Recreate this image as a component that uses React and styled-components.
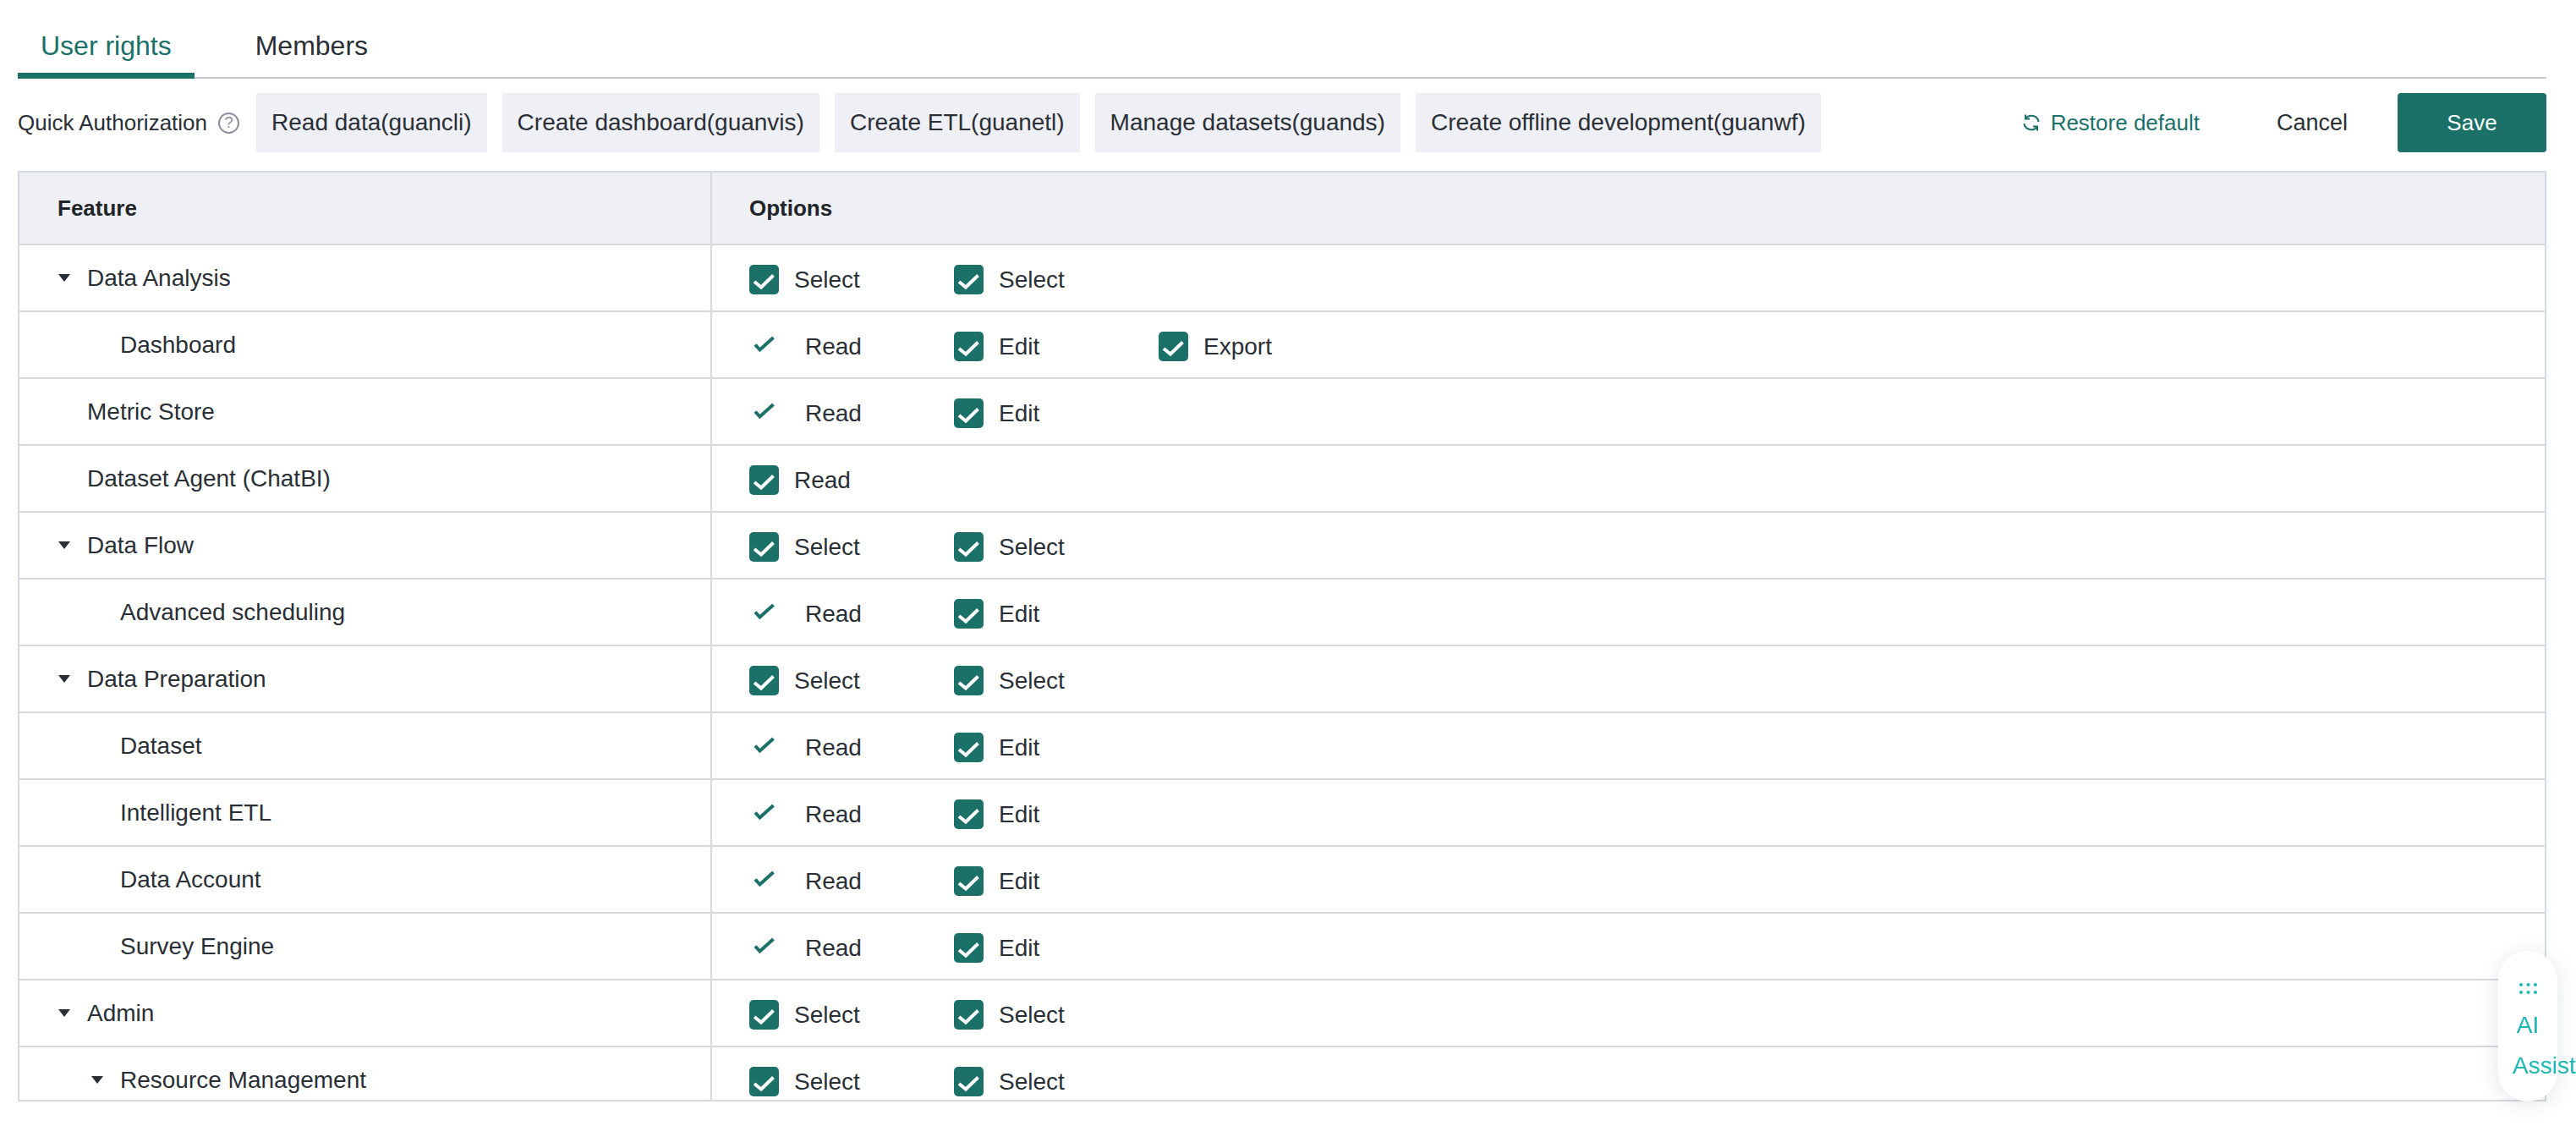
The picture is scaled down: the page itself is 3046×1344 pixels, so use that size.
import { createGlobalStyle } from 'styled-components';
import styled from 'styled-components';

const GlobalStyle = createGlobalStyle`
  html, body {
    margin: 0;
    height: 100%;
    overflow: hidden;
    background: #fff;
    font-family: "Liberation Sans", Arial, sans-serif;
    color: #2a2f36;
  }
`;

const Page = styled.div`
  padding: 0 35px 0 21px;
`;

const TabBar = styled.div`
  display: flex;
  align-items: flex-end;
  height: 93px;
  box-sizing: border-box;
  border-bottom: 2px solid #c3c8d4;
`;

const Tab = styled.div`
  height: 66px;
  box-sizing: border-box;
  margin-bottom: -2px;
  padding: 8px 27px 0;
  margin-right: 45px;
  font-size: 32px;
  line-height: 38px;
  color: ${(p) => (p.$active ? '#1b7168' : '#2a2f36')};
  border-bottom: 7px solid ${(p) => (p.$active ? '#1b7168' : 'transparent')};
`;

const Toolbar = styled.div`
  display: flex;
  align-items: center;
  height: 70px;
  margin-top: 17px;
`;

const QuickLabel = styled.span`
  font-size: 26px;
  white-space: nowrap;
`;

const HelpIcon = styled.span`
  display: flex;
  align-items: center;
  justify-content: center;
  width: 25px;
  height: 25px;
  box-sizing: border-box;
  margin: 0 20px 0 13px;
  border: 2px solid #8b909c;
  border-radius: 50%;
  font-size: 19px;
  color: #8b909c;
`;

const Chip = styled.button`
  height: 70px;
  padding: 0 18px;
  margin-right: 18px;
  border: 0;
  background: #eff0f5;
  font-family: inherit;
  font-size: 28px;
  color: #2a2f36;
  white-space: nowrap;
`;

const RestoreLink = styled.a`
  display: flex;
  align-items: center;
  gap: 12px;
  margin-left: auto;
  font-size: 26px;
  color: #1b7168;
`;

const CancelButton = styled.button`
  margin-left: 91px;
  padding: 0;
  border: 0;
  background: none;
  font-family: inherit;
  font-size: 27px;
  color: #2a2f36;
`;

const SaveButton = styled.button`
  width: 176px;
  height: 70px;
  margin-left: 59px;
  border: 0;
  border-radius: 4px;
  background: #1b7168;
  font-family: inherit;
  font-size: 26px;
  color: #fff;
`;

const Table = styled.div`
  height: 1100px;
  box-sizing: border-box;
  margin-top: 22px;
  border: 2px solid #d5d9e0;
  overflow: hidden;
`;

const HeadRow = styled.div`
  display: flex;
  height: 86px;
  box-sizing: border-box;
  background: #eff0f5;
  border-bottom: 2px solid #d5d9e0;
  font-size: 26px;
  font-weight: 700;
  color: #212529;
`;

const HeadFeature = styled.div`
  display: flex;
  align-items: center;
  width: 819px;
  box-sizing: border-box;
  padding-left: 45px;
  border-right: 2px solid #d5d9e0;
`;

const HeadOptions = styled.div`
  display: flex;
  align-items: center;
  padding-left: 44px;
`;

const ScrollBody = styled.div`
  height: 1010px;
  overflow-y: scroll;

  &::-webkit-scrollbar {
    width: 13px;
  }
  &::-webkit-scrollbar-track {
    background: transparent;
  }
  &::-webkit-scrollbar-thumb {
    background: #94a3b5;
    border-radius: 7px;
  }
`;

const RowList = styled.div`
  min-height: 1507px;
`;

const Row = styled.div`
  display: flex;
  height: 79px;
  box-sizing: border-box;
  border-bottom: 2px solid #d5d9e0;
`;

const FeatureCell = styled.div`
  display: flex;
  align-items: center;
  width: 819px;
  box-sizing: border-box;
  padding-left: ${(p) => 46 + p.$level * 39}px;
  border-right: 2px solid #d5d9e0;
  font-size: 28px;
`;

const CaretSlot = styled.span`
  display: flex;
  align-items: center;
  width: 34px;
  flex: none;
`;

const Caret = styled.span`
  width: 0;
  height: 0;
  border-left: 7px solid transparent;
  border-right: 7px solid transparent;
  border-top: 9px solid #2a2f36;
`;

const OptionsCell = styled.div`
  display: flex;
  align-items: center;
  padding: 4px 0 0 44px;
`;

const Option = styled.div`
  display: flex;
  align-items: center;
  width: 242px;
  font-size: 28px;
`;

const CheckBox = styled.span`
  display: flex;
  width: 35px;
  height: 35px;
  margin-right: 18px;
  border-radius: 5px;
  background: #1b7168;
`;

const ReadCheck = styled.svg`
  width: 25px;
  height: 20px;
  margin: -6px 36px 0 5px;
`;

const FloatButton = styled.div`
  position: fixed;
  right: 22px;
  bottom: 42px;
  width: 70px;
  height: 178px;
  box-sizing: border-box;
  padding: 38px 17px 0;
  border-radius: 35px;
  background: #fff;
  box-shadow: 0 4px 24px rgba(30, 40, 60, 0.12);
  color: #1bb8b5;
`;

const FloatDots = styled.svg`
  display: block;
  width: 21px;
  height: 13px;
  margin: 0 auto 13px;
`;

const FloatText = styled.div`
  font-size: 28px;
  line-height: 48px;
  text-align: center;
`;

const rows = [
  { label: 'Data Analysis', level: 0, caret: true, options: ['Select', 'Select'] },
  { label: 'Dashboard', level: 1, options: ['*Read', 'Edit', 'Export'] },
  { label: 'Metric Store', level: 0, options: ['*Read', 'Edit'] },
  { label: 'Dataset Agent (ChatBI)', level: 0, options: ['Read'] },
  { label: 'Data Flow', level: 0, caret: true, options: ['Select', 'Select'] },
  { label: 'Advanced scheduling', level: 1, options: ['*Read', 'Edit'] },
  { label: 'Data Preparation', level: 0, caret: true, options: ['Select', 'Select'] },
  { label: 'Dataset', level: 1, options: ['*Read', 'Edit'] },
  { label: 'Intelligent ETL', level: 1, options: ['*Read', 'Edit'] },
  { label: 'Data Account', level: 1, options: ['*Read', 'Edit'] },
  { label: 'Survey Engine', level: 1, options: ['*Read', 'Edit'] },
  { label: 'Admin', level: 0, caret: true, options: ['Select', 'Select'] },
  { label: 'Resource Management', level: 1, caret: true, options: ['Select', 'Select'] },
];

const chips = [
  'Read data(guancli)',
  'Create dashboard(guanvis)',
  'Create ETL(guanetl)',
  'Manage datasets(guands)',
  'Create offline development(guanwf)',
];

const OptionItem = ({ name }) => {
  // a leading * marks a right that is always on: bare tick, no box
  if (name.startsWith('*')) {
    return (
      <Option>
        <ReadCheck viewBox="0 0 25 20" fill="none" stroke="#1b7168" strokeWidth="4">
          <path d="M2 10.5 L7.5 16.5 L23.5 2" />
        </ReadCheck>
        {name.slice(1)}
      </Option>
    );
  }
  return (
    <Option>
      <CheckBox>
        <svg width="35" height="35" viewBox="0 0 35 35" fill="none" stroke="#fff" strokeWidth="4">
          <path d="M6 20 L14 26.5 L28.5 12.5" />
        </svg>
      </CheckBox>
      {name}
    </Option>
  );
};

const App = () => {
  return (
    <Page>
      <GlobalStyle />
      <TabBar>
        <Tab $active>User rights</Tab>
        <Tab>Members</Tab>
      </TabBar>

      <Toolbar>
        <QuickLabel>Quick Authorization</QuickLabel>
        <HelpIcon>?</HelpIcon>
        {chips.map((c) => (
          <Chip key={c}>{c}</Chip>
        ))}
        <RestoreLink>
          <svg width="22" height="22" viewBox="0 0 22 22" fill="none" stroke="#1b7168" strokeWidth="2">
            <path d="M4 1.5 V6.5 H9" />
            <path d="M4.2 6.2 A8.6 8.6 0 0 1 19.6 10" />
            <path d="M18 20.5 V15.5 H13" />
            <path d="M17.8 15.8 A8.6 8.6 0 0 1 2.4 12" />
          </svg>
          Restore default
        </RestoreLink>
        <CancelButton>Cancel</CancelButton>
        <SaveButton>Save</SaveButton>
      </Toolbar>

      <Table>
        <HeadRow>
          <HeadFeature>Feature</HeadFeature>
          <HeadOptions>Options</HeadOptions>
        </HeadRow>
        <ScrollBody>
          <RowList>
            {rows.map((r) => (
              <Row key={r.label}>
                <FeatureCell $level={r.level}>
                  <CaretSlot>{r.caret && <Caret />}</CaretSlot>
                  {r.label}
                </FeatureCell>
                <OptionsCell>
                  {r.options.map((o, i) => (
                    <OptionItem key={i} name={o} />
                  ))}
                </OptionsCell>
              </Row>
            ))}
          </RowList>
        </ScrollBody>
      </Table>

      <FloatButton>
        <FloatDots viewBox="0 0 21 13" fill="#1bb8b5">
          <circle cx="2" cy="2" r="2" />
          <circle cx="10.5" cy="2" r="2" />
          <circle cx="19" cy="2" r="2" />
          <circle cx="2" cy="11" r="2" />
          <circle cx="10.5" cy="11" r="2" />
          <circle cx="19" cy="11" r="2" />
        </FloatDots>
        <FloatText>AI Assist</FloatText>
      </FloatButton>
    </Page>
  );
};

export default App;
